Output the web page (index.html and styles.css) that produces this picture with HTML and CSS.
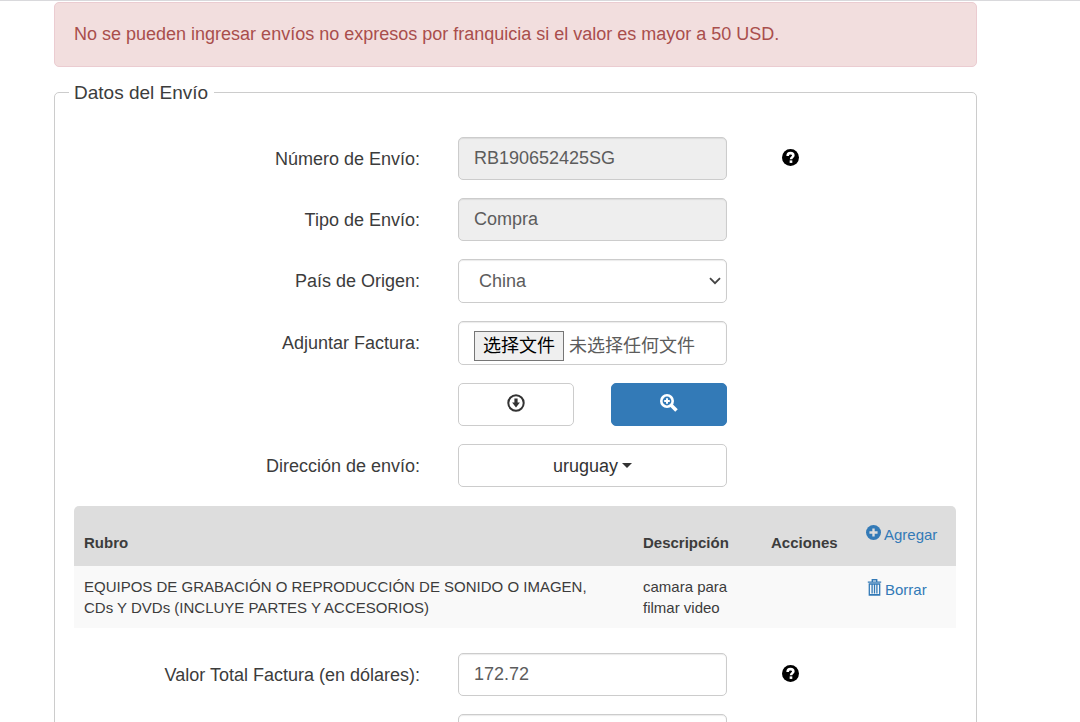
FILE: index.html
```html
<!DOCTYPE html>
<html lang="es">
<head>
<meta charset="utf-8">
<meta name="viewport" content="width=device-width, initial-scale=1">
<title>Datos del Envío</title>
<link rel="stylesheet" href="styles.css">
</head>
<body>
<svg class="sprite" aria-hidden="true">
  <symbol id="i-help" viewBox="0 0 16 16">
    <circle cx="8" cy="8" r="8" fill="currentColor"/>
    <path d="M5.300 6.500C5.300 4.600 6.400 3.900 8 3.900s2.700.8 2.700 2.100c0 1.600-2.200 1.700-2.200 3.700" fill="none" stroke="#fff" stroke-width="2.400"/>
    <path d="M7.200 10.700h2.500v2.400H7.200z" fill="#fff"/>
  </symbol>
  <symbol id="i-down" viewBox="0 0 18 18">
    <circle cx="9" cy="9" r="7.700" fill="none" stroke="currentColor" stroke-width="2"/>
    <path d="M7.400 4.400h3.200v4.200h2.300L9 13.400 5.100 8.600h2.300z" fill="currentColor"/>
  </symbol>
  <symbol id="i-zoom" viewBox="0 0 18 18">
    <circle cx="7" cy="7" r="5.700" fill="none" stroke="currentColor" stroke-width="2.600"/>
    <path d="M11.200 11.200l5.300 5.300" fill="none" stroke="currentColor" stroke-width="3.600"/>
    <path d="M6 4.200h2V6h1.800v2H8v1.800H6V8H4.200V6H6z" fill="currentColor"/>
  </symbol>
  <symbol id="i-plus" viewBox="0 0 14 14">
    <circle cx="7" cy="7" r="7" fill="currentColor"/>
    <path d="M7 3.200v7.600M3.200 7h7.600" fill="none" stroke="#ddd" stroke-width="2.200"/>
  </symbol>
  <symbol id="i-trash" viewBox="0 0 14 17">
    <path d="M4.800 2.500V.7h4.400v1.800M.3 3.100h13.400" fill="none" stroke="currentColor" stroke-width="1.400"/>
    <path d="M1.800 5v11.200h10.400V5M1.200 5h11.600M4.600 5.500v9M7 5.500v9M9.400 5.500v9M1.500 15.700h11" fill="none" stroke="currentColor" stroke-width="1.300"/>
  </symbol>
</svg>

<main class="page">
  <div class="alert" role="alert">No se pueden ingresar envíos no expresos por franquicia si el valor es mayor a 50 USD.</div>

  <form class="panel" aria-labelledby="panel-title">
    <h2 class="panel-title" id="panel-title">Datos del Envío</h2>

    <div class="rows">
      <div class="row">
        <label class="label" for="numero">Número de Envío:</label>
        <input class="control" id="numero" type="text" value="RB190652425SG" readonly>
        <button class="help" type="button" aria-label="Ayuda"><svg class="icon-help"><use href="#i-help"/></svg></button>
      </div>
      <div class="row">
        <label class="label" for="tipo">Tipo de Envío:</label>
        <input class="control" id="tipo" type="text" value="Compra" readonly>
      </div>
      <div class="row">
        <label class="label" for="pais">País de Origen:</label>
        <div class="select-wrap">
          <select class="control select" id="pais"><option>China</option></select>
          <svg class="chevron" viewBox="0 0 12 8" aria-hidden="true"><path d="M1 1.200l5 5 5-5" fill="none" stroke="currentColor" stroke-width="1.800"/></svg>
        </div>
      </div>
      <div class="row">
        <label class="label" for="factura">Adjuntar Factura:</label>
        <div class="control file">
          <input class="file-input" id="factura" type="file">
          <label class="file-button" for="factura">选择文件</label>
          <span class="file-name">未选择任何文件</span>
        </div>
      </div>
      <div class="row">
        <div class="buttons">
          <button class="btn" type="button" aria-label="Descargar"><svg class="icon-btn"><use href="#i-down"/></svg></button>
          <button class="btn btn-primary" type="button" aria-label="Ver"><svg class="icon-btn"><use href="#i-zoom"/></svg></button>
        </div>
      </div>
      <div class="row">
        <label class="label" for="direccion">Dirección de envío:</label>
        <button class="btn" id="direccion" type="button">uruguay<span class="caret"></span></button>
      </div>
    </div>

    <table class="items">
      <thead>
        <tr>
          <th class="col-rubro">Rubro</th>
          <th class="col-desc">Descripción</th>
          <th class="col-acc">Acciones</th>
          <td class="col-link"><a class="action" href="#"><svg class="icon-plus"><use href="#i-plus"/></svg>Agregar</a></td>
        </tr>
      </thead>
      <tbody>
        <tr>
          <td class="col-rubro">EQUIPOS DE GRABACIÓN O REPRODUCCIÓN DE SONIDO O IMAGEN, CDs Y DVDs (INCLUYE PARTES Y ACCESORIOS)</td>
          <td>camara para filmar video</td>
          <td></td>
          <td class="col-link"><a class="action" href="#"><svg class="icon-trash"><use href="#i-trash"/></svg>Borrar</a></td>
        </tr>
      </tbody>
    </table>

    <div class="rows">
      <div class="row">
        <label class="label" for="valor">Valor Total Factura (en dólares):</label>
        <input class="control" id="valor" type="text" value="172.72">
        <button class="help" type="button" aria-label="Ayuda"><svg class="icon-help"><use href="#i-help"/></svg></button>
      </div>
      <div class="row">
        <input class="control" type="text" aria-label="Valor">
      </div>
    </div>
  </form>
</main>
</body>
</html>
```
FILE: styles.css
```css
* { box-sizing: border-box; }

body {
  margin: 0;
  height: 100vh;
  overflow: hidden;
  border-top: 1px solid #d9d9dc;
  background: #fff;
  color: #3c3c3c;
  font: 18px/24px "Liberation Sans", Arial, "Noto Sans CJK SC", sans-serif;
}

.sprite { display: none; }

.page { padding: 1px 103px 0 54px; }

.alert {
  padding: 19px 19px 20px;
  border: 1px solid #ebccd1;
  border-radius: 5px;
  background: #f2dede;
  color: #a94e4c;
}

.panel {
  margin-top: 25px;
  padding: 0 20px 20px 19px;
  border: 1px solid #ccc;
  border-radius: 5px;
}

.panel-title {
  width: fit-content;
  margin: -13px 0 31px -5px;
  padding: 0 6px 0 5px;
  background: #fff;
  font-size: 19px;
  font-weight: normal;
  line-height: 26px;
}

.rows { display: grid; gap: 18px; }

.row {
  display: grid;
  grid-template-columns: 346fr 269fr 191fr;
  gap: 38px;
}

.row > :not(.label):not(.help) { grid-column: 2; }

.label {
  padding-top: 10px;
  text-align: right;
}

.control, .btn {
  width: 100%;
  min-width: 0;
  height: 43px;
  border: 1px solid #ccc;
  border-radius: 5px;
  background: #fff;
  font: inherit;
}

.control {
  padding: 0 15px;
  box-shadow: inset 0 1px 1px rgba(0, 0, 0, 0.08);
  color: #5c5c5c;
}

.control[readonly] { background: #eee; }

.select-wrap { position: relative; }

.select {
  display: block;
  height: 44px;
  padding: 0 20px;
  appearance: none;
}

.chevron {
  position: absolute;
  top: 18px;
  right: 6px;
  width: 12px;
  height: 8px;
  color: #444;
  pointer-events: none;
}

.file {
  display: flex;
  align-items: center;
  gap: 5px;
  position: relative;
  height: 44px;
  padding-top: 6px;
  white-space: nowrap;
}

.file-input {
  position: absolute;
  width: 1px;
  height: 1px;
  opacity: 0;
}

.file-button {
  padding: 2px 8px;
  border: 1px solid #767676;
  background: #efefef;
  color: #000;
}

.help {
  justify-self: start;
  align-self: start;
  display: flex;
  margin: 12px 0 0 17px;
  padding: 0;
  border: 0;
  background: none;
  color: #000;
}

.icon-help { width: 17px; height: 17px; }

.buttons {
  display: grid;
  grid-template-columns: 1fr 1fr;
  gap: 37px;
}

.btn {
  display: flex;
  align-items: center;
  justify-content: center;
  padding: 0 12px;
  color: #333;
}

.buttons .btn { padding-bottom: 3px; }

.btn-primary {
  border-color: #337ab7;
  background: #337ab7;
  color: #fff;
}

.icon-btn { width: 18px; height: 18px; }

.caret {
  margin-left: 4px;
  border: 5px solid transparent;
  border-top-color: #333;
  border-bottom: 0;
}

.items {
  width: 100%;
  margin: 19px 0 25px;
  border-spacing: 0;
  table-layout: fixed;
  font-size: 15px;
  line-height: 21px;
}

.items th, .items td {
  padding: 10px;
  text-align: left;
  vertical-align: top;
}

.items thead th, .items thead td { height: 60px; background: #ddd; }
.items thead th { padding-bottom: 13px; vertical-align: bottom; }
.items thead th:first-child { border-top-left-radius: 5px; }
.items thead td:last-child { border-top-right-radius: 5px; }
.items tbody td { height: 62px; background: #f9f9f9; }

.items .col-rubro { padding-right: 32px; }
.col-desc { width: 128px; }
.col-acc { width: 96px; }
.col-link { width: 99px; }

.items thead .col-link { padding: 18px 0 0 9px; }
.items tbody .col-link { padding: 13px 0 0 10px; }

.action {
  display: flex;
  align-items: flex-start;
  gap: 3px;
  color: #337ab7;
  text-decoration: none;
}

.icon-plus { width: 15px; height: 15px; margin-top: 1px; }
.icon-trash { width: 15px; height: 17px; }
```
